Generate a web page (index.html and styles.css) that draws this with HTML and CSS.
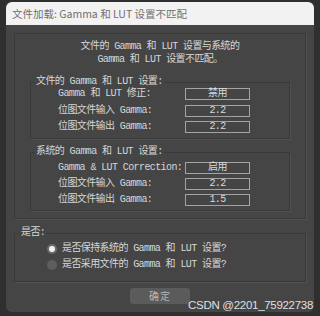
FILE: index.html
```html
<!DOCTYPE html>
<html lang="zh">
<head>
  <meta charset="UTF-8" />
  <title>文件加载: Gamma 和 LUT 设置不匹配</title>
  <link rel="stylesheet" href="styles.css">
</head>
<body>
  <div class="dialog">
    <div class="titlebar">文件加载: Gamma 和 LUT 设置不匹配</div>
    <div class="content">
      <div class="frame">
        <p class="message">文件的 Gamma 和 LUT 设置与系统的<br>Gamma 和 LUT 设置不匹配。</p>

        <fieldset class="group">
          <legend>文件的 Gamma 和 LUT 设置:</legend>
          <div class="row"><span class="label">Gamma 和 LUT 修正:</span><span class="value">禁用</span></div>
          <div class="row"><span class="label">位图文件输入 Gamma:</span><span class="value">2.2</span></div>
          <div class="row"><span class="label">位图文件输出 Gamma:</span><span class="value">2.2</span></div>
        </fieldset>

        <fieldset class="group system">
          <legend>系统的 Gamma 和 LUT 设置:</legend>
          <div class="row"><span class="label">Gamma &amp; LUT Correction:</span><span class="value">启用</span></div>
          <div class="row"><span class="label">位图文件输入 Gamma:</span><span class="value">2.2</span></div>
          <div class="row"><span class="label">位图文件输出 Gamma:</span><span class="value">1.5</span></div>
        </fieldset>
      </div>

      <fieldset class="choice">
        <legend>是否:</legend>
        <label class="radio"><span class="dot checked"></span>是否保持系统的 Gamma 和 LUT 设置?</label>
        <label class="radio"><span class="dot"></span>是否采用文件的 Gamma 和 LUT 设置?</label>
      </fieldset>

      <div class="actions">
        <button class="btn">确定</button>
      </div>
    </div>
  </div>

  <div class="watermark">CSDN @2201_75922738</div>
</body>
</html>
```

FILE: styles.css
```css
* {
  margin: 0;
  padding: 0;
  box-sizing: border-box;
}

body {
  background: #2f2f2f;
  width: 320px;
  height: 316px;
  overflow: hidden;
  position: relative;
  font-family: "Liberation Mono", "Noto Sans CJK SC", monospace;
  font-size: 10px;
  line-height: 12px;
  letter-spacing: -0.6px;
  color: #d6d6d6;
}

.dialog {
  margin: 2px 0 0 6px;
  width: 308px;
  height: 310px;
  background: #454545;
  border-radius: 6px;
  overflow: hidden;
}

.titlebar {
  height: 23px;
  line-height: 23px;
  padding-left: 6px;
  background: #f2f2f2;
  color: #707070;
  font-family: "Noto Sans CJK SC", "Noto Sans", sans-serif;
  font-size: 10.5px;
  letter-spacing: 0;
}

.content {
  padding: 8px 8px 0 8px;
}

.frame {
  border: 1px solid #393939;
  box-shadow: 1px 1px 0 #515151;
  padding: 6px 0 7px 0;
}

.message {
  text-align: center;
  line-height: 13px;
  margin-bottom: 10px;
}

fieldset {
  border: 1px solid #393939;
  box-shadow: 1px 1px 0 #515151;
  min-inline-size: 0;
}

legend {
  line-height: 12px;
  padding: 0 1px;
  margin-left: 4px;
}

.group {
  margin: 0 15px;
  padding: 0 0 5px 0;
}

.group.system {
  margin-top: 7px;
  padding-top: 4px;
  padding-bottom: 4px;
}

.row {
  display: flex;
  align-items: center;
  height: 12px;
  padding-left: 27px;
  margin-bottom: 4.5px;
}

.row:last-child {
  margin-bottom: 0;
}

.system .row {
  margin-bottom: 4px;
}

.system .row:last-child {
  margin-bottom: 0;
}

.label {
  width: 127px;
  white-space: nowrap;
}

.value {
  width: 65px;
  height: 12px;
  line-height: 10px;
  border: 1px solid #a4a4a4;
  text-align: center;
  color: #dadada;
}

.choice {
  margin-top: 8px;
  padding: 2px 0 8px 0;
}

.choice legend {
  margin-left: 5px;
}

.radio {
  display: flex;
  align-items: center;
  gap: 5px;
  height: 16px;
  padding-left: 32px;
}

.dot {
  width: 10px;
  height: 10px;
  border-radius: 50%;
  background: #5e5e5e;
  display: flex;
  align-items: center;
  justify-content: center;
}

.dot.checked {
  background: #6c6c6c;
}

.dot.checked::after {
  content: "";
  width: 6px;
  height: 6px;
  border-radius: 50%;
  background: #f2f2f2;
}

.actions {
  display: flex;
  justify-content: center;
  margin-top: 6px;
}

.btn {
  width: 60px;
  height: 16px;
  border: none;
  border-radius: 3px;
  background: #5b5b5b;
  color: #b8b8b8;
  font-family: "Noto Sans CJK SC", sans-serif;
  font-size: 10px;
  line-height: 16px;
  letter-spacing: 1px;
}

.watermark {
  position: absolute;
  right: 7px;
  bottom: 4px;
  font-family: "Liberation Sans", sans-serif;
  font-size: 11.5px;
  line-height: 13px;
  letter-spacing: -0.3px;
  color: rgba(255, 255, 255, 0.85);
}
```
